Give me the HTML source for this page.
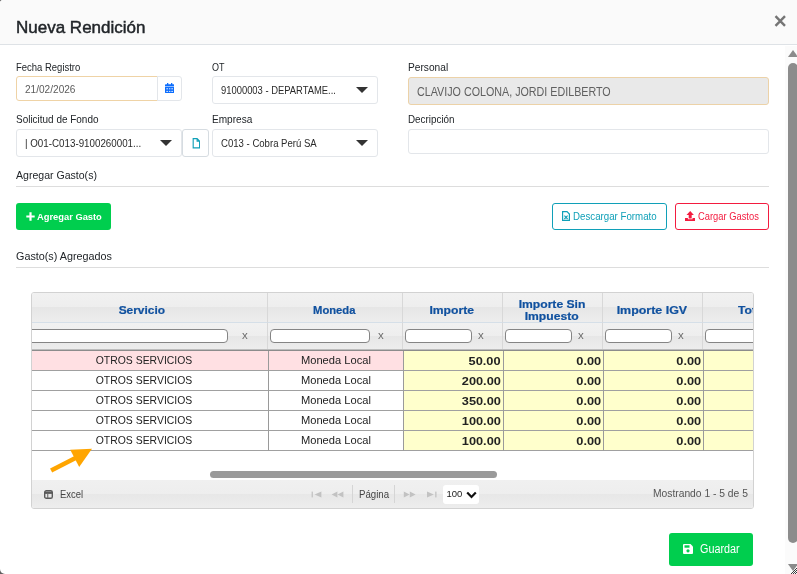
<!DOCTYPE html>
<html>
<head>
<meta charset="utf-8">
<style>
*{box-sizing:border-box;margin:0;padding:0}
html,body{width:797px;height:574px;overflow:hidden;background:#5f5f5f;font-family:"Liberation Sans",sans-serif;}
#modal{position:absolute;left:0;top:0;width:797px;height:574px;background:#fff;transform:translateZ(0);will-change:transform;border-radius:3px 0 0 5px;overflow:hidden}
#hdr{position:absolute;left:0;top:0;width:797px;height:45px;background:#fafafa;border-bottom:1px solid #dee2e6}
#title{position:absolute;left:16px;top:17px;font-size:17px;line-height:22px;color:#212529;font-weight:normal;letter-spacing:0px;-webkit-text-stroke:0.45px #212529}
.abs{position:absolute}
.lbl{position:absolute;font-size:10.6px;line-height:13px;color:#212529;white-space:nowrap}
.box{position:absolute;background:#fff;border:1px solid #e3e6ea;border-radius:3px}
.txt{position:absolute;font-size:10.4px;line-height:13px;color:#333;white-space:nowrap}
.sx{display:inline-block;transform-origin:0 50%}
.caret{position:absolute;width:0;height:0;border-left:6px solid transparent;border-right:6px solid transparent;border-top:6px solid #333}
.hr{position:absolute;height:1px;background:#dddddd}
.btn{position:absolute;border-radius:3px;font-size:10.4px;line-height:13px;white-space:nowrap}
/* grid */
#grid{position:absolute;left:31px;top:292px;width:723px;height:217px;border:1px solid #d2d2d2;border-radius:3px;overflow:hidden;background:#fff}
.gh{position:absolute;top:0;height:29px;border-right:1px solid #d8d8d8;background:linear-gradient(#f1f1f1 0%,#eeeeee 49%,#e6e6e6 50%,#ededed 100%)}
.gh span{position:absolute;left:0;right:0;text-align:center;font-weight:bold;color:#10519f;font-size:10.2px;line-height:12px}
.gh span em{font-style:normal;display:inline-block;transform:translateY(2px) scaleX(1.19);white-space:nowrap;-webkit-text-stroke:.2px #10519f}
.gf{position:absolute;top:29px;height:27px;border-right:1px solid #d8d8d8;border-top:1px solid #d5dfe8;background:linear-gradient(#f1f1f1 0%,#eeeeee 49%,#e6e6e6 50%,#ededed 100%)}
.gf i{position:absolute;top:6px;height:14px;border:1px solid #858585;border-radius:4px;background:#fff}
.gf b{position:absolute;top:7px;font-weight:normal;font-size:10px;line-height:12px;color:#6c6c6c;transform:scaleX(1.15);transform-origin:0 50%;-webkit-font-smoothing:antialiased}
.row{position:absolute;left:0;height:20px;width:722px}
.c{position:absolute;top:0;height:20px;border-right:1px solid #9a9a9a;border-bottom:1px solid #a0a0a0;font-size:10.8px;line-height:19px;color:#222;white-space:nowrap;overflow:hidden}
.c.s{left:0;width:237px;text-align:center;padding-right:12px}
.c u{text-decoration:none;display:inline-block;transform:scaleX(.965);position:relative;top:0px}
.c.m{left:237px;width:135px;text-align:center}
.c.n{background:#ffffcc;text-align:right;font-weight:bold;padding-right:2px;font-size:11.4px;line-height:21px}
.c.n u{transform:scaleX(1.12);transform-origin:100% 50%}
.c.n1{left:372px;width:100px}
.c.n2{left:472px;width:100px}
.c.n3{left:572px;width:100px}
.c.n4{left:672px;width:60px;border-right:none}
.pink .s,.pink .m{background:#ffe0e3}
</style>
</head>
<body>
<div id="modal">
  <div id="hdr">
    <div id="title">Nueva Rendición</div>
    <svg class="abs" style="left:774px;top:15px" width="12" height="12" viewBox="0 0 12 12"><path d="M1.5 1.2 L11 10.8 M11 1.2 L1.5 10.8" stroke="#757575" stroke-width="2.4" fill="none"/></svg>
  </div>

  <!-- row 1 -->
  <div class="lbl" style="left:16px;top:61px"><span class="sx" style="transform:scaleX(.895)">Fecha Registro</span></div>
  <div class="box" style="left:16px;top:76px;width:142px;height:25px;border-color:#efd3a6;border-radius:3px 0 0 3px"></div>
  <div class="txt" style="left:25px;top:83px;color:#5c5c5c"><span class="sx" style="transform:scaleX(.97)">21/02/2026</span></div>
  <div class="box" style="left:157px;top:76px;width:25px;height:25px;border-radius:0 3px 3px 0"></div>
  <svg class="abs" style="left:164.8px;top:83px" width="9.3" height="10.1" viewBox="0 0 9.3 10.1"><path d="M2 0 H3.3 V1.3 H6 V0 H7.3 V1.3 H8.5 Q9.3 1.3 9.3 2.1 V3.35 H0 V2.1 Q0 1.3 .8 1.3 H2 Z" fill="#0d6efd"/><path d="M0 3.85 H9.3 V9.3 Q9.3 10.1 8.5 10.1 H.8 Q0 10.1 0 9.3 Z" fill="#0d6efd"/><g fill="#fff" opacity=".85"><rect x="1.3" y="5.3" width="1.7" height="1"/><rect x="3.9" y="5.3" width="1.5" height="1"/><rect x="6.3" y="5.3" width="1.7" height="1"/><rect x="1.3" y="7.9" width="1.7" height="1"/><rect x="3.9" y="7.9" width="1.5" height="1"/><rect x="6.3" y="7.9" width="1.7" height="1"/></g></svg>

  <div class="lbl" style="left:212px;top:61px"><span class="sx" style="transform:scaleX(.85)">OT</span></div>
  <div class="box" style="left:212px;top:76px;width:166px;height:28px"></div>
  <div class="txt" style="left:221px;top:84px"><span class="sx" style="transform:scaleX(.94);font-size:10px;color:#2a2a2a">91000003 - DEPARTAME...</span></div>
  <div class="caret" style="left:356px;top:87px"></div>

  <div class="lbl" style="left:408px;top:61px"><span class="sx" style="transform:scaleX(.96)">Personal</span></div>
  <div class="box" style="left:408px;top:77px;width:361px;height:28px;background:#e9e9e9;border-color:#ecd2a8"></div>
  <div class="txt" style="left:417px;top:85px;font-size:12.2px;line-height:15px;color:#606060"><span class="sx" style="transform:scaleX(.88)">CLAVIJO COLONA, JORDI EDILBERTO</span></div>

  <!-- row 2 -->
  <div class="lbl" style="left:16px;top:113px"><span class="sx" style="transform:scaleX(.94)">Solicitud de Fondo</span></div>
  <div class="box" style="left:16px;top:129px;width:166px;height:28px"></div>
  <div class="txt" style="left:25px;top:137px"><span class="sx" style="transform:scaleX(.978);font-size:10px;color:#2a2a2a">| O01-C013-9100260001...</span></div>
  <div class="caret" style="left:160px;top:140px"></div>
  <div class="box" style="left:182px;top:129px;width:27px;height:28px;border-color:#d6dce1"></div>
  <svg class="abs" style="left:191.5px;top:138px" width="8.5" height="10.5" viewBox="0 0 9 12"><path d="M1 0.7 H5.5 L8.3 3.5 V11.3 H1 Z M5.5 0.7 V3.5 H8.3" fill="none" stroke="#10a0b8" stroke-width="1.3"/></svg>

  <div class="lbl" style="left:212px;top:113px"><span class="sx" style="transform:scaleX(.95)">Empresa</span></div>
  <div class="box" style="left:212px;top:129px;width:166px;height:28px"></div>
  <div class="txt" style="left:221px;top:137px"><span class="sx" style="transform:scaleX(.957);font-size:10px;color:#2a2a2a">C013 - Cobra Perú SA</span></div>
  <div class="caret" style="left:356px;top:140px"></div>

  <div class="lbl" style="left:408px;top:113px"><span class="sx" style="transform:scaleX(.93)">Decripción</span></div>
  <div class="box" style="left:408px;top:129px;width:361px;height:25px"></div>

  <div class="lbl" style="left:16px;top:168px;font-size:11.6px;line-height:14px"><span class="sx" style="transform:scaleX(.91)">Agregar Gasto(s)</span></div>
  <div class="hr" style="left:16px;top:186px;width:753px"></div>

  <div class="btn" style="left:16px;top:203px;width:95px;height:27px;background:#00ce4e;color:#fff;font-weight:bold;padding:7px 0 0 10px"><span class="sx" style="transform:scaleX(.945);margin-left:10.5px;font-size:9.9px">Agregar Gasto</span></div><svg class="abs" style="left:26px;top:212px" width="9" height="9" viewBox="0 0 9 9"><path d="M4.5 0.3 V8.7 M0.3 4.5 H8.7" stroke="#fff" stroke-width="2.2" fill="none"/></svg>
  <div class="btn" style="left:552px;top:203px;width:115px;height:27px;border:1px solid #10a0b8;color:#10a0b8;padding:6px 0 0 20px"><span class="sx" style="transform:scaleX(.935);margin-left:-.5px">Descargar Formato</span></div>
  <svg class="abs" style="left:562px;top:211px" width="8" height="10" viewBox="0 0 8 10"><path d="M0.6 0.6 H5 L7.4 3 V9.4 H0.6 Z" fill="none" stroke="#10a0b8" stroke-width="1.2"/><path d="M2.4 4.6 L5.6 8 M5.6 4.6 L2.4 8" stroke="#10a0b8" stroke-width="1.1" fill="none"/></svg>
  <div class="btn" style="left:675px;top:203px;width:94px;height:27px;border:1px solid #f31b3f;color:#f31b3f;padding:6px 0 0 21px"><span class="sx" style="transform:scaleX(.90);margin-left:1px">Cargar Gastos</span></div>
  <svg class="abs" style="left:684.6px;top:211px" width="10.4" height="10" viewBox="0 0 10.4 10"><path d="M5.2 0 L8.9 4.1 H6.7 V7.4 H3.7 V4.1 H1.5 Z M0 7 H2.9 V8.3 H7.5 V7 H10.4 V10 H0 Z" fill="#f31b3f"/></svg>

  <div class="lbl" style="left:16px;top:249px;font-size:11.6px;line-height:14px"><span class="sx" style="transform:scaleX(.93)">Gasto(s) Agregados</span></div>
  <div class="hr" style="left:16px;top:267px;width:753px"></div>

  <!-- grid -->
  <div id="grid">
    <div class="abs" style="left:-1px;top:0"><div class="gh" style="left:0;width:237px"><span style="top:10px;left:-15px"><em style="transform:translateY(2px) scaleX(1.17)">Servicio</em></span></div>
    <div class="gh" style="left:237px;width:135px"><span style="top:10px;left:-2px"><em style="transform:translateY(2px) scaleX(1.10)">Moneda</em></span></div>
    <div class="gh" style="left:372px;width:100px"><span style="top:10px;left:-1px"><em>Importe</em></span></div>
    <div class="gh" style="left:472px;width:100px"><span style="top:4px;left:-1px"><em>Importe Sin</em><br><em>Impuesto</em></span></div>
    <div class="gh" style="left:572px;width:100px"><span style="top:10px;left:-1px"><em style="transform:translateY(2px) scaleX(1.22)">Importe IGV</em></span></div>
    <div class="gh" style="left:672px;width:60px;border-right:none"><span style="top:10px;left:35px;right:auto;width:80px;text-align:left"><em style="transform-origin:0 50%">Total</em></span></div>

    <div class="gf" style="left:0;width:237px"><i style="left:-6px;width:203px"></i><b style="left:211px">x</b></div>
    <div class="gf" style="left:237px;width:135px"><i style="left:2px;width:100px"></i><b style="left:110px">x</b></div>
    <div class="gf" style="left:372px;width:100px"><i style="left:2px;width:67px"></i><b style="left:75px">x</b></div>
    <div class="gf" style="left:472px;width:100px"><i style="left:2px;width:67px"></i><b style="left:75px">x</b></div>
    <div class="gf" style="left:572px;width:100px"><i style="left:2px;width:67px"></i><b style="left:75px">x</b></div>
    <div class="gf" style="left:672px;width:60px;border-right:none"><i style="left:2px;width:67px"></i></div>

    </div><div class="abs" style="left:0;top:56px;width:722px;height:2px;background:linear-gradient(#bdbdbd 50%,#8c8c8c 50%);z-index:3"></div>

    <div class="row pink" style="top:58px"><div class="c s"><u>OTROS SERVICIOS</u></div><div class="c m"><u style="transform:scaleX(1.03)">Moneda Local</u></div><div class="c n n1"><u>50.00</u></div><div class="c n n2"><u>0.00</u></div><div class="c n n3"><u>0.00</u></div><div class="c n n4"></div></div>
    <div class="row" style="top:78px"><div class="c s"><u>OTROS SERVICIOS</u></div><div class="c m"><u style="transform:scaleX(1.03)">Moneda Local</u></div><div class="c n n1"><u>200.00</u></div><div class="c n n2"><u>0.00</u></div><div class="c n n3"><u>0.00</u></div><div class="c n n4"></div></div>
    <div class="row" style="top:98px"><div class="c s"><u>OTROS SERVICIOS</u></div><div class="c m"><u style="transform:scaleX(1.03)">Moneda Local</u></div><div class="c n n1"><u>350.00</u></div><div class="c n n2"><u>0.00</u></div><div class="c n n3"><u>0.00</u></div><div class="c n n4"></div></div>
    <div class="row" style="top:118px"><div class="c s"><u>OTROS SERVICIOS</u></div><div class="c m"><u style="transform:scaleX(1.03)">Moneda Local</u></div><div class="c n n1"><u>100.00</u></div><div class="c n n2"><u>0.00</u></div><div class="c n n3"><u>0.00</u></div><div class="c n n4"></div></div>
    <div class="row" style="top:138px"><div class="c s"><u>OTROS SERVICIOS</u></div><div class="c m"><u style="transform:scaleX(1.03)">Moneda Local</u></div><div class="c n n1"><u>100.00</u></div><div class="c n n2"><u>0.00</u></div><div class="c n n3"><u>0.00</u></div><div class="c n n4"></div></div>

    <!-- arrow -->
    <svg class="abs" style="left:0;top:150px;z-index:4" width="80" height="36" viewBox="0 150 80 36"><path d="M19.1 177.5 L43.5 165.1" stroke="#ffa500" stroke-width="4.5" fill="none"/><path d="M60 155.7 L38.2 156.8 L47.2 174.1 Z" fill="#ffa500"/></svg>

    <!-- h scrollbar -->
    <div class="abs" style="left:178px;top:178px;width:287px;height:7px;border-radius:3.5px;background:#9a9a9a"></div>

    <!-- pager -->
    <div class="abs" style="left:0;top:187px;width:722px;height:28px;background:linear-gradient(#f0f0f0 0%,#eeeeee 49%,#e7e7e7 50%,#ededed 100%)"></div>
    <svg class="abs" style="left:12px;top:197px" width="9" height="9" viewBox="0 0 9 9"><rect x="0.7" y="0.7" width="7.6" height="7.6" rx="1.6" fill="none" stroke="#5a5a5a" stroke-width="1.4"/><rect x="1" y="1.6" width="7" height="2.3" fill="#5a5a5a"/><rect x="3.2" y="4" width="1.1" height="4" fill="#6a6a6a"/></svg>
    <div class="abs" style="left:28px;top:195px;font-size:10.5px;line-height:13px;color:#444"><span class="sx" style="transform:scaleX(.9)">Excel</span></div>
    <svg class="abs" style="left:279px;top:198px" width="130" height="7" viewBox="279 198 130 7" fill="#c2c2c2"><rect x="279.6" y="198.6" width="1.3" height="5.8"/><path d="M289.4 198.5 V204.5 L282.6 201.5 Z"/><path d="M305.4 198.5 V204.5 L299.6 201.5 Z M311.4 198.5 V204.5 L305.6 201.5 Z"/><path d="M371.8 198.5 V204.5 L377.6 201.5 Z M377.8 198.5 V204.5 L383.6 201.5 Z"/><path d="M395 198.5 V204.5 L401.8 201.5 Z"/><rect x="403.2" y="198.6" width="1.3" height="5.8"/></svg>
    <div class="abs" style="left:320px;top:192px;width:1px;height:18px;background:#d5d5d5"></div>
    <div class="abs" style="left:327px;top:195px;font-size:10.5px;line-height:13px;color:#444"><span class="sx" style="transform:scaleX(.92)">Página</span></div>
    <div class="abs" style="left:362px;top:192px;width:1px;height:18px;background:#d5d5d5"></div>
    <div class="abs" style="left:411px;top:192px;width:36px;height:19px;background:#fff;border-radius:3px"></div>
    <div class="abs" style="left:414.5px;top:195px;font-size:9.5px;line-height:12.6px;color:#222">100</div>
    <svg class="abs" style="left:434px;top:198px" width="11" height="8" viewBox="0 0 11 8"><path d="M1.2 1.5 L5.5 6 L9.8 1.5" stroke="#111" stroke-width="2.2" fill="none"/></svg>
    <div class="abs" style="right:5px;top:194px;font-size:10.5px;line-height:13px;color:#555"><span class="sx" style="transform:scaleX(.98);transform-origin:100% 50%">Mostrando 1 - 5 de 5</span></div>
  </div>

  <!-- Guardar -->
  <div class="btn" style="left:669px;top:533px;width:84px;height:33px;background:#00ce4e;color:#fff;font-size:12px;line-height:15px;padding:9px 0 0 31px;border-radius:3px"><span class="sx" style="transform:scaleX(.9)">Guardar</span></div>
  <svg class="abs" style="left:682.5px;top:544px" width="10" height="10" viewBox="0 0 10 10"><path d="M1 0 H7.5 L10 2.5 V9 Q10 10 9 10 H1 Q0 10 0 9 V1 Q0 0 1 0 Z" fill="#fff"/><rect x="1.5" y="1.3" width="5" height="2.4" fill="#00ce4e"/><circle cx="5" cy="6.8" r="1.6" fill="#00ce4e"/></svg>

  <!-- page scrollbar -->
  <div class="abs" style="left:785px;top:46px;width:12px;height:528px;background:#fbfbfb"></div>
  <div class="abs" style="left:787.5px;top:50px;width:0;height:0;border-left:5px solid transparent;border-right:5px solid transparent;border-bottom:7px solid #8b8b8b"></div>
  <div class="abs" style="left:788px;top:63px;width:10px;height:480px;border-radius:5px;background:#8c8c8c"></div>
  <div class="abs" style="left:787.5px;top:564px;width:0;height:0;border-left:5px solid transparent;border-right:5px solid transparent;border-top:7px solid #8b8b8b"></div>
  <svg class="abs" style="left:791px;top:568px" width="6" height="6" viewBox="0 0 6 6"><path d="M6 0 L0 6 M6 2 L2 6 M6 4 L4 6" stroke="#222" stroke-width=".9"/></svg>
</div>
</body>
</html>
